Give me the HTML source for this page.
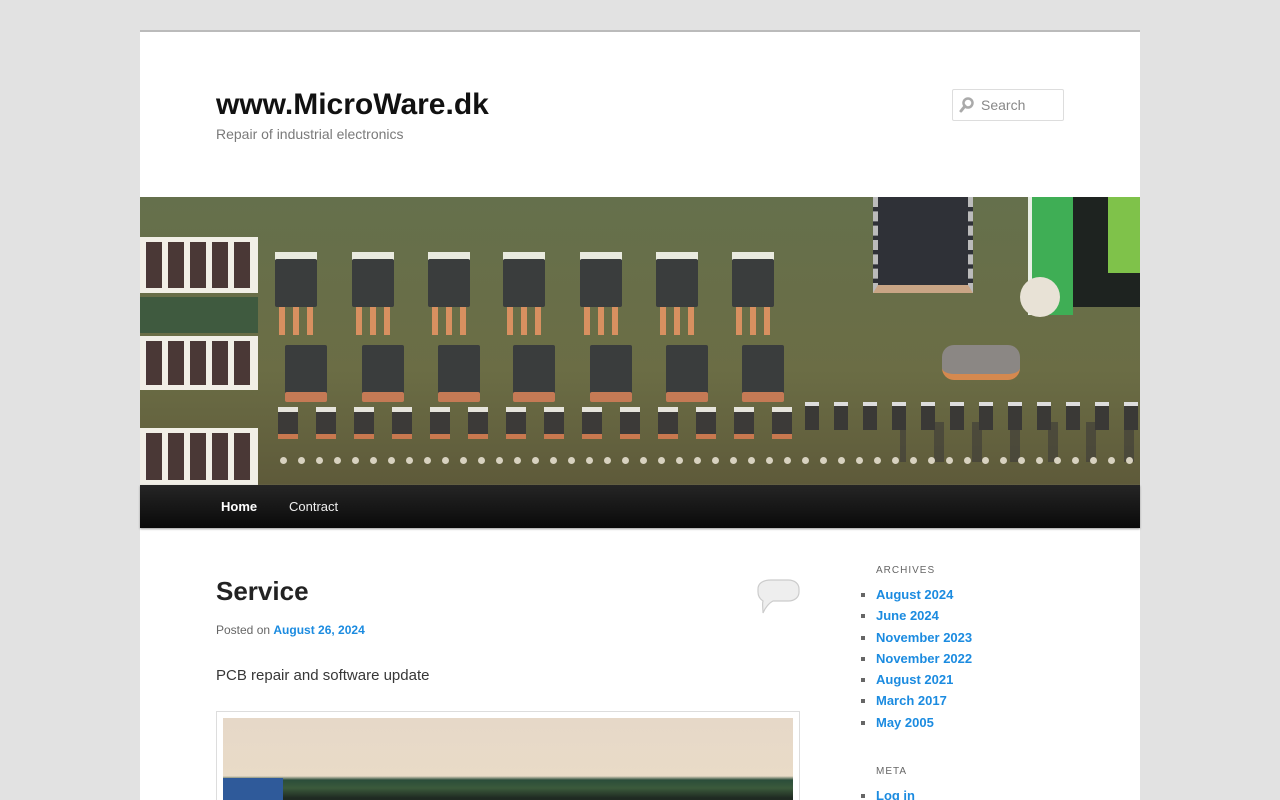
<!DOCTYPE html>
<html style="overflow:hidden;height:800px"><head><meta charset="utf-8"><style>
*{margin:0;padding:0;box-sizing:border-box}
html{overflow:hidden;height:800px}
body{background:#e2e2e2;width:1280px;height:800px;overflow:hidden;font-family:"Liberation Sans",sans-serif;position:relative}
.a{position:absolute}
#page{position:absolute;left:140px;top:30px;width:1000px;height:770px;background:#fff;border-top:2px solid #bbb}
a{color:#1b8be0;text-decoration:none;font-weight:bold}
#hdr{position:absolute;left:140px;top:197px;width:1000px;height:288px;overflow:hidden;background:linear-gradient(180deg,#65704c,#6b6d45 60%,#5e5a3a);}
.tr{position:absolute;width:42px;background:#3a3d3d;border-radius:2px}
.tab{position:absolute;width:42px;height:8px;background:#e9eadf}
.cu{position:absolute;height:10px;background:#c57a55;border-radius:2px}
.leg{position:absolute;width:6px;background:#d89060}
.con{position:absolute;left:0;width:118px;border:5px solid #f1efe6;border-left:none;background:repeating-linear-gradient(90deg,#f1efe6 0 6px,#4a3836 6px 22px)}
.sm{position:absolute;width:20px;height:32px;background:#3c3a38;border-top:5px solid #e6e4dc;border-bottom:5px solid #c8784f}
nav{position:absolute;left:140px;top:485px;width:1000px;height:43px;background:linear-gradient(#252525,#0a0a0a);box-shadow:0 1px 2px #999}
nav span{position:absolute;top:14px;font-size:13px;color:#eee}
ul{list-style:square;color:#666}
.side li{font-size:13px;line-height:21.3px;margin-left:0}
</style></head><body>
<div id="page"></div>
<div class="a" style="left:216px;top:88px;font-size:30px;font-weight:bold;color:#111">www.MicroWare.dk</div>
<div class="a" style="left:216px;top:126px;font-size:14px;color:#7a7a7a">Repair of industrial electronics</div>
<div class="a" style="left:952px;top:89px;width:112px;height:32px;border:1px solid #ddd;border-radius:2px;background:#fff"></div>
<svg class="a" style="left:958px;top:95px" width="18" height="20" viewBox="0 0 18 20"><circle cx="10" cy="8" r="4.5" fill="none" stroke="#aaa" stroke-width="2.5"/><path d="M7 11 L3 16" stroke="#aaa" stroke-width="3" stroke-linecap="round"/></svg>
<div class="a" style="left:981px;top:97px;font-size:14px;color:#888">Search</div>

<div id="hdr">
<div class="con" style="top:40px;height:56px"></div>
<div class="con" style="top:139px;height:54px"></div>
<div class="con" style="top:231px;height:57px"></div>
<div class="a" style="left:0;top:100px;width:118px;height:36px;background:#3f5a3f"></div>
<div class="a" style="left:733px;top:0;width:100px;height:96px;background:#2f3137;border-left:5px dashed #bbb;border-right:5px dashed #bbb;border-bottom:8px solid #c9a585"></div>
<div class="a" style="left:888px;top:0;width:45px;height:118px;background:#3fae55;border-left:4px solid #e9efe6"></div>
<div class="a" style="left:933px;top:0;width:67px;height:110px;background:#1e2320"></div>
<div class="a" style="left:968px;top:0;width:32px;height:76px;background:#7fc24a"></div>
<div class="a" style="left:880px;top:80px;width:40px;height:40px;border-radius:50%;background:#e8e2d6"></div>
<div class="a" style="left:802px;top:148px;width:78px;height:35px;border-radius:12px;background:#8b8784;border-bottom:6px solid #d5894f"></div>
<div class="a" style="left:140px;top:225px;width:860px;height:40px;background:repeating-linear-gradient(90deg,transparent 0 8px,#3c3a38 8px 18px,transparent 18px 38px);opacity:.6;clip-path:inset(0 0 0 620px)"></div>
<div id="cols"></div>
</div>
<script>
var h='';var xs=[135,212,288,363,440,516,592];
xs.forEach(function(x){
h+='<div class="tab" style="left:'+x+'px;top:55px"></div><div class="tr" style="left:'+x+'px;top:62px;height:48px"></div>';
h+='<div class="leg" style="left:'+(x+4)+'px;top:110px;height:28px"></div><div class="leg" style="left:'+(x+18)+'px;top:110px;height:28px"></div><div class="leg" style="left:'+(x+32)+'px;top:110px;height:28px"></div>';
h+='<div class="tr" style="left:'+(x+10)+'px;top:148px;height:50px"></div><div class="cu" style="left:'+(x+10)+'px;top:195px;width:42px"></div>';
});
for(var x=138;x<660;x+=38){h+='<div class="sm" style="left:'+x+'px;top:210px"></div>';}
for(var x=140;x<1000;x+=18){h+='<div class="a" style="left:'+x+'px;top:260px;width:7px;height:7px;border-radius:50%;background:#d8d2c0"></div>';}
for(var x=665;x<1000;x+=29){h+='<div class="a" style="left:'+x+'px;top:205px;width:14px;height:28px;background:#3a3936;border-top:4px solid #ddd"></div>';}
document.getElementById('cols').innerHTML=h;
</script>

<nav><span style="left:81px;font-weight:bold;color:#fff">Home</span><span style="left:149px">Contract</span></nav>

<div class="a" style="left:216px;top:576px;font-size:26px;font-weight:bold;color:#222">Service</div>
<svg class="a" style="left:757px;top:579px" width="44" height="37" viewBox="0 0 44 37"><path d="M14 1 H31 C38 1 42 5 42 10 V13 C42 18 38 22 31 22 H16 C12 24 8 29 6 34 C6 29 5 25 6 22 C3 20 1 17 1 13 V10 C1 5 5 1 14 1Z" fill="#eee" stroke="#ccc" stroke-width="1.2"/></svg>
<div class="a" style="left:216px;top:623px;font-size:12px;color:#666">Posted on <a>August 26, 2024</a></div>
<div class="a" style="left:216px;top:667px;font-size:15px;color:#373737">PCB repair and software update</div>
<div class="a" style="left:216px;top:711px;width:584px;height:89px;border:1px solid #ddd;border-bottom:none;background:#fff"></div>
<div class="a" style="left:223px;top:718px;width:570px;height:82px;background:linear-gradient(180deg,#e6d8c8 0,#e9dbc7 58px,#2b4d3a 62px,#3b5a3b 70px,#1f2a22 80px)"></div>
<div class="a" style="left:223px;top:778px;width:60px;height:22px;background:#2f5a9a"></div>

<div class="a" style="left:876px;top:565px;font-size:10px;letter-spacing:1px;color:#666">ARCHIVES</div>
<ul class="a side" style="left:876px;top:584px;padding-left:0">
<li><a>August 2024</a></li><li><a>June 2024</a></li><li><a>November 2023</a></li><li><a>November 2022</a></li><li><a>August 2021</a></li><li><a>March 2017</a></li><li><a>May 2005</a></li></ul>
<div class="a" style="left:876px;top:766px;font-size:10px;letter-spacing:1px;color:#666">META</div>
<ul class="a side" style="left:876px;top:785px"><li><a>Log in</a></li></ul>
</body></html>
